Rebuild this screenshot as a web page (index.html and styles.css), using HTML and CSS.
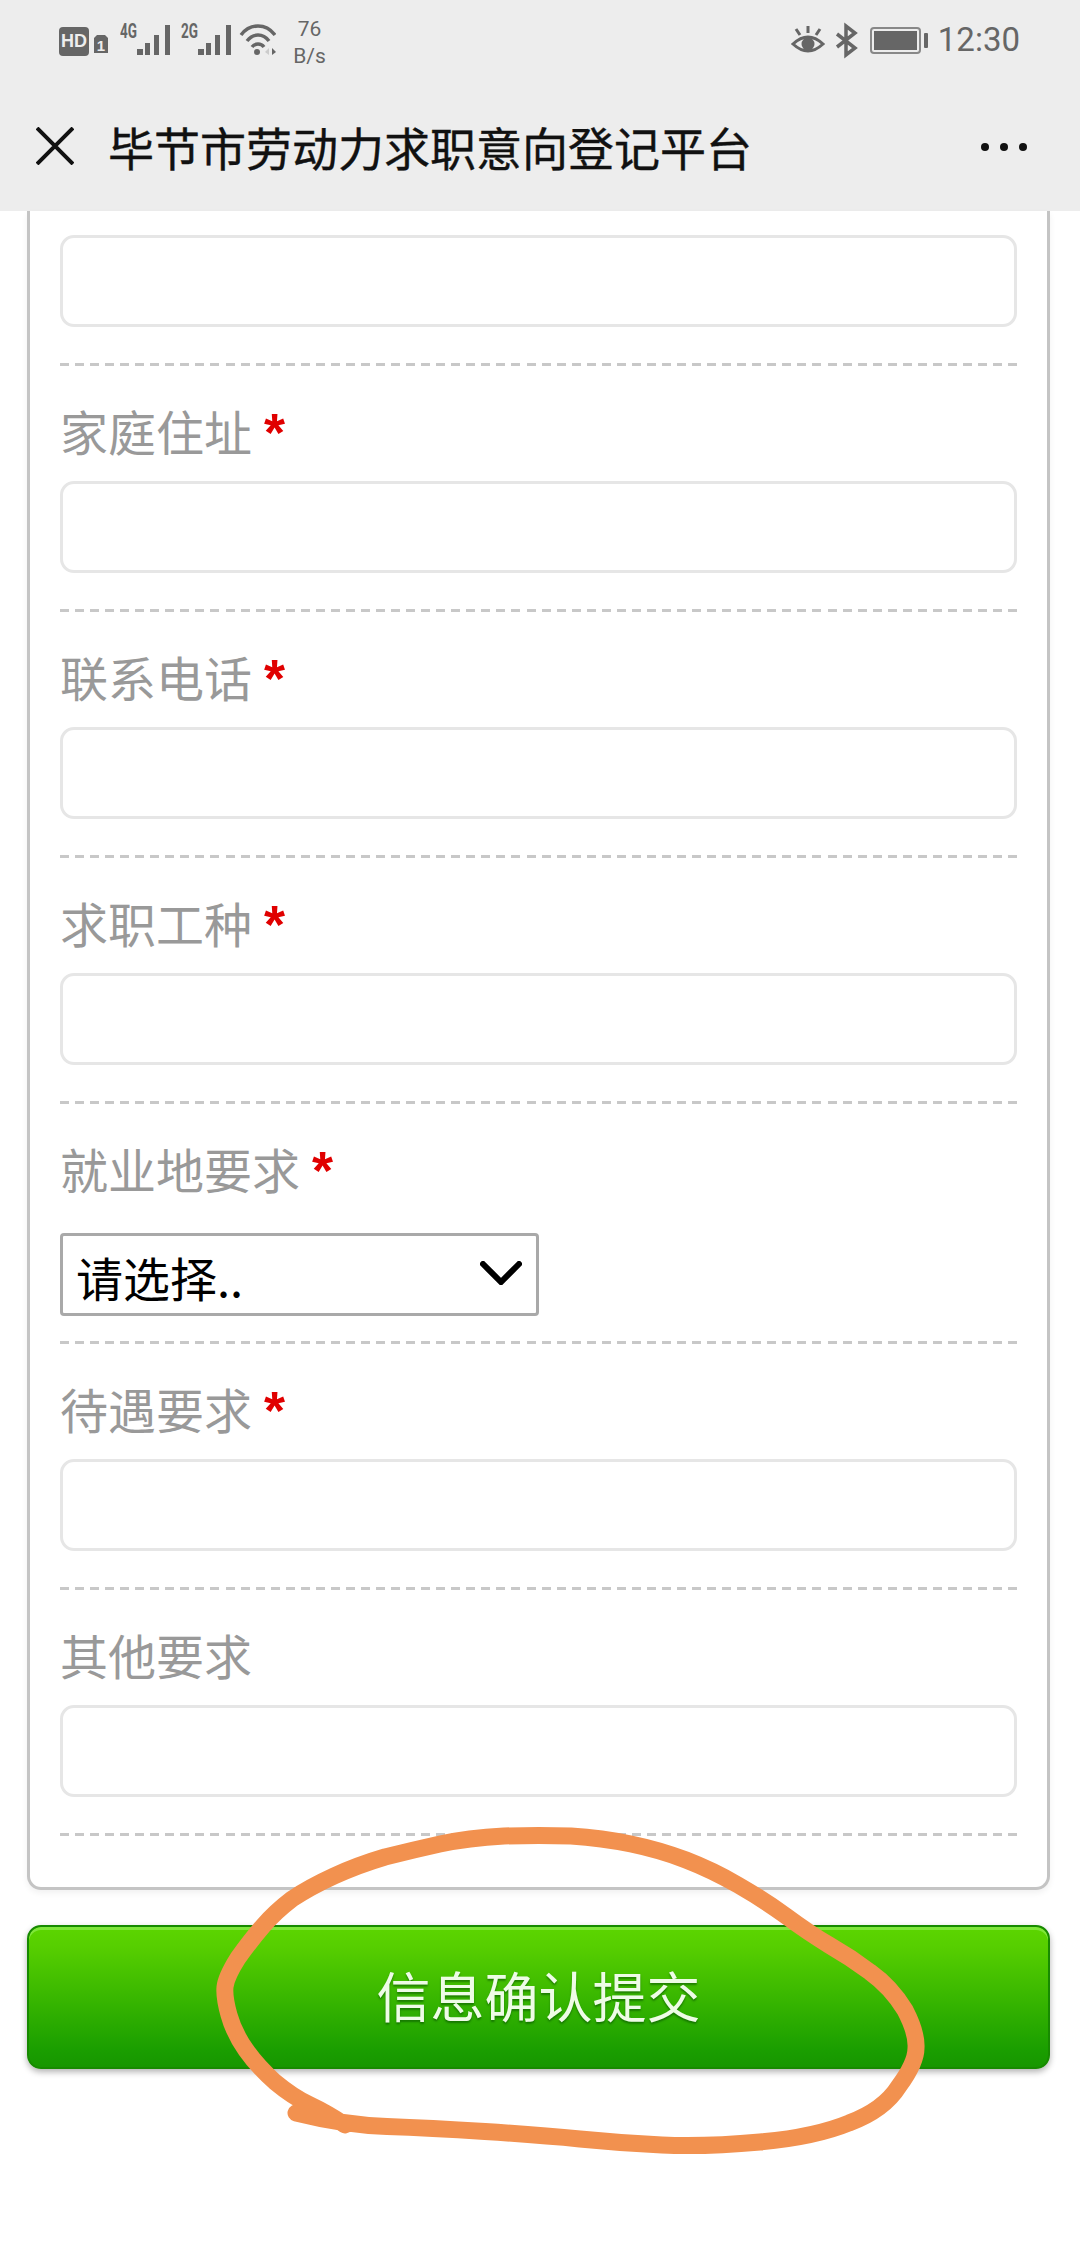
FILE: index.html
```html
<!DOCTYPE html>
<html lang="zh-CN">
<head>
    <meta charset="UTF-8">
    <meta name="viewport" content="width=device-width, initial-scale=1.0">
    <title>毕节市劳动力求职意向登记平台</title>
    <link rel="stylesheet" href="styles.css">
</head>
<body>
    <header class="top">
        <div class="status">
            <div class="status-left">
                <div class="hd-badge">HD</div>
                <svg class="ic-sim" viewBox="0 0 14 40">
                    <path d="M3 15H11L14 18V33H0V18Z" fill="#666"/>
                    <text x="7" y="31" text-anchor="middle" class="sim-text">1</text>
                </svg>
                <svg class="ic-signal" viewBox="0 0 50 40">
                    <text x="0" y="18" textLength="17" lengthAdjust="spacingAndGlyphs" class="net-text">4G</text>
                    <rect x="17" y="29" width="6" height="6" fill="#666"/>
                    <rect x="25" y="23" width="5" height="12" fill="#666"/>
                    <rect x="34" y="15" width="5" height="20" fill="#666"/>
                    <rect x="45" y="5" width="5" height="30" fill="#666"/>
                </svg>
                <svg class="ic-signal ic-signal2" viewBox="0 0 50 40">
                    <text x="0" y="18" textLength="17" lengthAdjust="spacingAndGlyphs" class="net-text">2G</text>
                    <rect x="17" y="29" width="6" height="6" fill="#666"/>
                    <rect x="25" y="23" width="5" height="12" fill="#666"/>
                    <rect x="34" y="15" width="5" height="20" fill="#666"/>
                    <rect x="45" y="5" width="5" height="30" fill="#666"/>
                </svg>
                <svg class="ic-wifi" viewBox="0 0 37 40" fill="none" stroke="#666" stroke-width="3.5">
                    <path d="M2 15C11 3 27 3 36 15"/>
                    <path d="M8 21C14 13 24 13 30 21"/>
                    <path d="M13 27C16 23 22 23 25 27"/>
                    <circle cx="18" cy="32" r="3" fill="#666" stroke="none"/>
                    <path d="M26 32L30 28V35Z" fill="#ccc" stroke="none"/>
                    <path d="M33 28V35L37 32Z" fill="#666" stroke="none"/>
                </svg>
                <div class="speed">76<br>B/s</div>
            </div>
            <div class="status-right">
                <svg class="ic-eye" viewBox="0 0 34 40" fill="none" stroke="#666" stroke-width="3">
                    <path d="M2 24Q17 10 32 24Q17 38 2 24Z"/>
                    <circle cx="17" cy="24" r="6.5" fill="#666" stroke="none"/>
                    <path d="M17 6V13M5 9L9 15M29 9L25 15"/>
                </svg>
                <svg class="ic-bt" viewBox="0 0 25 40" fill="none" stroke="#666" stroke-width="3.5">
                    <path d="M2 14L20 28L11 35V6L20 13L2 27"/>
                </svg>
                <svg class="ic-battery" viewBox="0 0 58 40">
                    <rect x="1" y="8" width="49" height="25" rx="3" fill="none" stroke="#888" stroke-width="2"/>
                    <rect x="4" y="11" width="43" height="19" fill="#666"/>
                    <rect x="54" y="13" width="4" height="15" rx="1" fill="#666"/>
                </svg>
                <span class="time">12:30</span>
            </div>
        </div>
        <div class="titlebar">
            <svg class="ic-close" viewBox="0 0 38 38" fill="none" stroke="#111" stroke-width="4">
                <path d="M1 1L37 37M37 1L1 37"/>
            </svg>
            <h1 class="title">毕节市劳动力求职意向登记平台</h1>
            <div class="dots"><i></i><i></i><i></i></div>
        </div>
    </header>

    <main class="page">
        <form class="card">
            <div class="field first">
                <input type="text">
            </div>
            <div class="field">
                <label class="label">家庭住址<b>*</b></label>
                <input type="text">
            </div>
            <div class="field">
                <label class="label">联系电话<b>*</b></label>
                <input type="text">
            </div>
            <div class="field">
                <label class="label">求职工种<b>*</b></label>
                <input type="text">
            </div>
            <div class="field field-select">
                <label class="label">就业地要求<b>*</b></label>
                <div class="select-wrap">
                    <select>
                        <option>请选择..</option>
                    </select>
                    <svg class="ic-chevron" viewBox="0 0 42 24" fill="none" stroke="#000" stroke-width="6" stroke-linecap="round">
                        <path d="M3 3L21 21L39 3"/>
                    </svg>
                </div>
            </div>
            <div class="field">
                <label class="label">待遇要求<b>*</b></label>
                <input type="text">
            </div>
            <div class="field">
                <label class="label">其他要求</label>
                <input type="text">
            </div>
        </form>
        <button class="submit" type="button">信息确认提交</button>
    </main>

    <!-- hand drawn circle around the button -->
    <svg class="scribble" viewBox="0 0 1080 2244" fill="none" stroke="#f2914f" stroke-width="17" stroke-linecap="round" stroke-linejoin="round">
        <path d="M296 2113Q344 2125 387 2126.5Q430 2128 485 2131.5Q540 2135 580 2139Q620 2143 662 2145Q705 2147 760 2142Q815 2137 849 2123Q884 2110 899 2086Q916 2063 916 2048Q917 2033 905 2010Q891 1987 870 1972Q850 1957 829 1945Q809 1933 786 1916Q764 1900 738 1885Q712 1870 686 1860Q660 1850 631 1844Q602 1838 571 1836Q540 1835 504 1836Q468 1838 440 1844Q413 1850 385 1857Q358 1865 334 1876Q310 1887 292 1899Q275 1912 263 1926Q251 1940 238 1958Q226 1977 225 1987Q224 1997 229 2015Q234 2033 246 2050Q258 2067 275 2082Q293 2097 310 2105Q327 2113 345 2125"/>
    </svg>
</body>
</html>
```

FILE: styles.css
```css
html, body {
    margin: 0;
    height: 2244px;
    overflow: hidden;
    background-color: #fff;
}
body {
    position: relative;
    font-family: "Noto Sans CJK SC", "Noto Sans", sans-serif;
}

/* status bar + title */
.top {
    height: 211px;
    background-color: #ededed;
}
.status {
    height: 80px;
    display: flex;
    justify-content: space-between;
    align-items: center;
    padding: 0 60px 0 59px;
}
.status svg {
    display: block;
    height: 40px;
    flex: none;
}
.status-left, .status-right {
    display: flex;
    align-items: center;
}
.hd-badge {
    width: 30px;
    height: 29px;
    margin-top: 3px;
    border-radius: 4px;
    background-color: #666;
    font: bold 18px/29px "Liberation Sans", sans-serif;
    color: #ededed;
    text-align: center;
}
.ic-sim { width: 14px; margin-left: 5px; }
.ic-signal { width: 50px; margin-left: 12px; }
.ic-signal2 { margin-left: 11px; }
.ic-wifi { width: 37px; margin-left: 8px; }
.sim-text {
    font: bold 15px "Liberation Sans", sans-serif;
    fill: #ededed;
}
.net-text {
    font: bold 20px "Roboto", sans-serif;
    fill: #666;
}
.speed {
    margin-left: 17px;
    padding-top: 6px;
    width: 33px;
    font: 21px/27px "Roboto", sans-serif;
    color: #666;
    text-align: center;
}
.status-right {
    gap: 10px;
}
.ic-eye { width: 34px; }
.ic-bt { width: 25px; }
.ic-battery { width: 58px; }
.time {
    font: 33px/40px "Roboto", sans-serif;
    color: #666;
}
.titlebar {
    height: 131px;
    display: flex;
    align-items: center;
    padding: 0 53px 0 36px;
    box-sizing: border-box;
}
.ic-close {
    width: 38px;
    height: 38px;
    flex: none;
}
.title {
    flex: 1;
    margin: 0 0 0 34px;
    font-size: 46px;
    font-weight: 400;
    line-height: 60px;
    color: #111;
    -webkit-text-stroke: 0.4px #111;
}
.dots {
    display: flex;
    gap: 11px;
    padding-top: 2px;
}
.dots i {
    width: 8px;
    height: 8px;
    border-radius: 50%;
    background-color: #111;
}

/* form */
.page {
    padding: 0 30px 0 27px;
}
.card {
    border: 3px solid #c4c4c4;
    border-top: none;
    border-radius: 0 0 14px 14px;
    padding: 0 30px 51px;
    box-shadow: 0 3px 6px rgba(0, 0, 0, 0.06);
}
.field {
    padding-top: 28px;
    padding-bottom: 39px;
    background: repeating-linear-gradient(90deg, #c8c8c8 0 9px, transparent 9px 15.05px) left bottom / 100% 3px no-repeat;
}
.field.first {
    padding-top: 24px;
}
.field-select {
    padding-bottom: 28px;
}
.label {
    display: block;
    height: 72px;
    margin-bottom: 15px;
    font-size: 48px;
    line-height: 72px;
    color: #999;
}
.label b {
    margin-left: 12px;
    font-family: "Liberation Sans", sans-serif;
    font-size: 54px;
    line-height: 48px;
    color: #e00000;
}
.field input {
    display: block;
    width: 100%;
    height: 92px;
    box-sizing: border-box;
    border: 3px solid #e6e6e6;
    border-radius: 14px;
    background-color: #fff;
    outline: none;
}
.field-select .label {
    margin-bottom: 29px;
}
.select-wrap {
    position: relative;
    width: 479px;
}
.select-wrap select {
    display: block;
    width: 100%;
    height: 83px;
    box-sizing: border-box;
    padding: 4px 0 0 13px;
    border: 3px solid #a9a9a9;
    border-radius: 4px;
    background-color: #fff;
    font-family: inherit;
    font-size: 47px;
    color: #000;
    appearance: none;
}
.ic-chevron {
    position: absolute;
    top: 28px;
    right: 17px;
    width: 42px;
    height: 24px;
}
.submit {
    display: block;
    width: 100%;
    height: 144px;
    margin-top: 35px;
    padding: 0 0 6px;
    box-sizing: border-box;
    border: 2px solid #178a00;
    border-radius: 14px;
    background: linear-gradient(#5cd500, #56ce00 15%, #1a9e00 88%, #179600);
    box-shadow: inset 0 3px 0 #7fe63a, 0 3px 6px rgba(0, 0, 0, 0.3);
    font-family: inherit;
    font-size: 54px;
    color: #eefce6;
    text-shadow: 0 2px 2px rgba(0, 70, 0, 0.5);
}

/* marker circle drawn on the screenshot */
.scribble {
    position: absolute;
    left: 0;
    top: 0;
    width: 1080px;
    height: 2244px;
    pointer-events: none;
}
```
